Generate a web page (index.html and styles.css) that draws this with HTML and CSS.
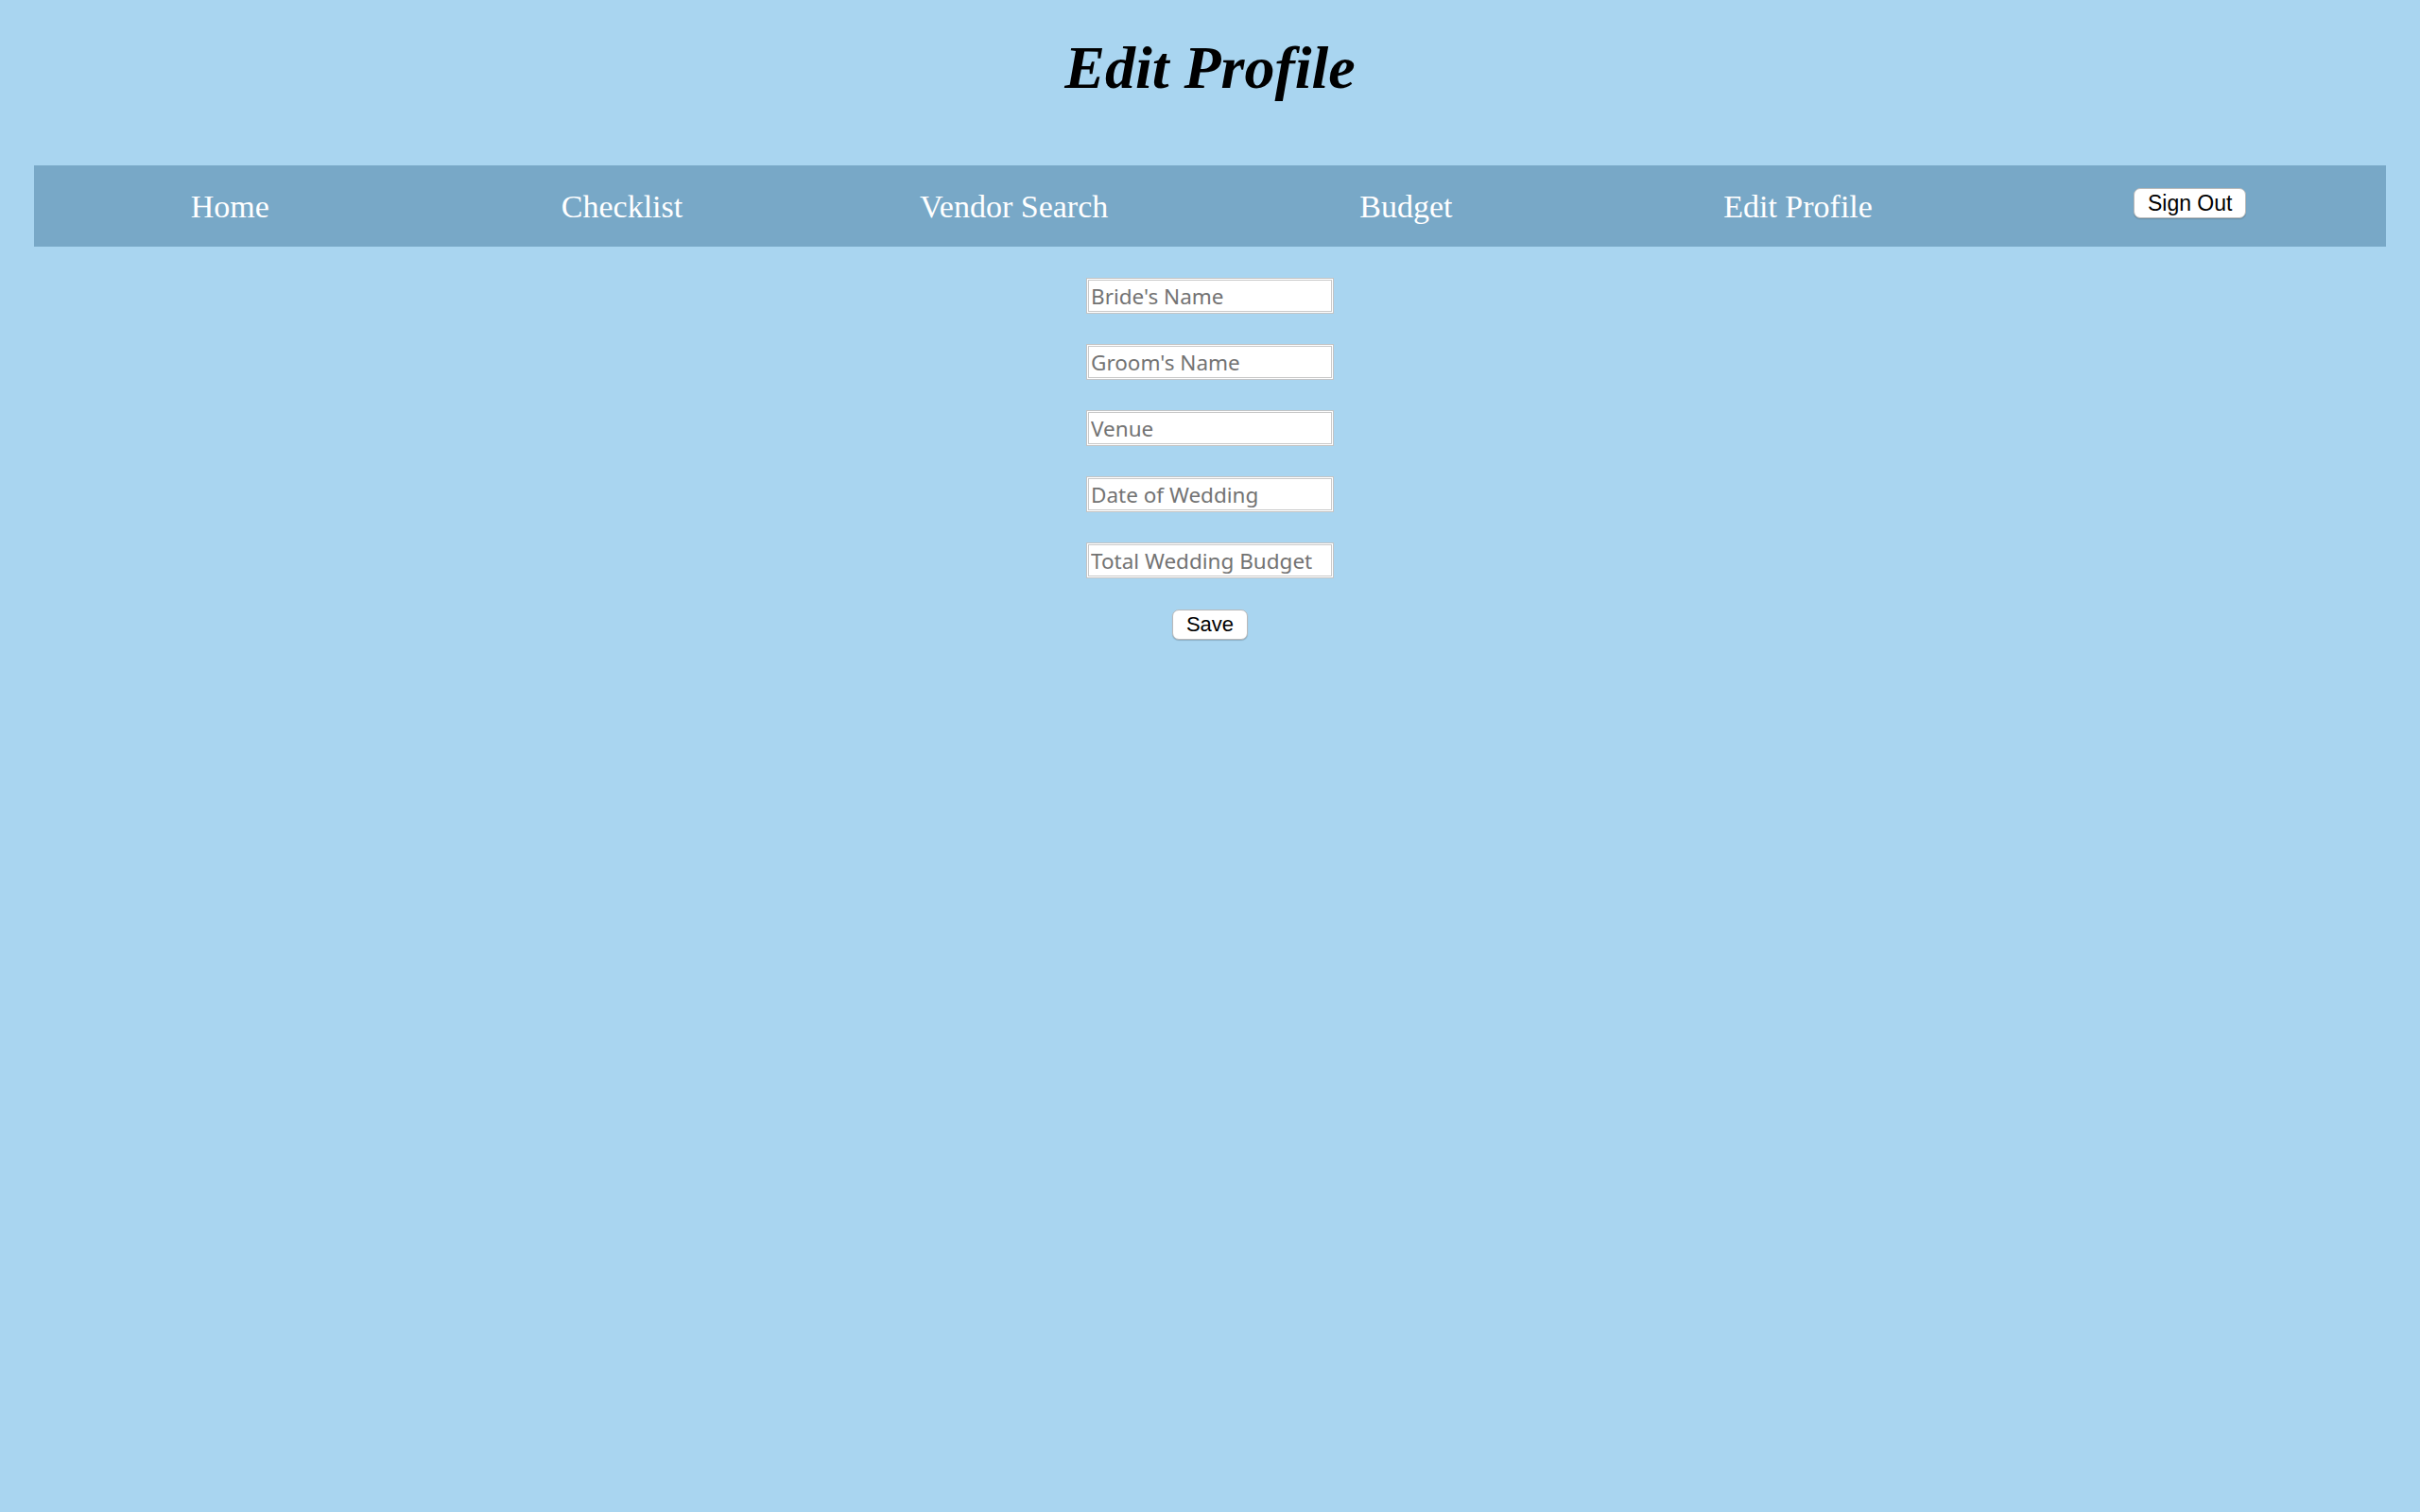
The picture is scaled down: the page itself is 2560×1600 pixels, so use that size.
FILE: index.html
```html
<!DOCTYPE html>
<html lang="en">
<head>
<meta charset="utf-8">
<title>Edit Profile</title>
<link rel="stylesheet" href="styles.css">
</head>
<body>
  <h1 class="page-title">Edit Profile</h1>
  <nav class="nav">
    <a class="nav-item" href="#">Home</a>
    <a class="nav-item" href="#">Checklist</a>
    <a class="nav-item" href="#">Vendor Search</a>
    <a class="nav-item" href="#">Budget</a>
    <a class="nav-item" href="#">Edit Profile</a>
    <div class="nav-item"><button class="btn btn-signout" type="button">Sign Out</button></div>
  </nav>
  <form class="profile-form">
    <input class="field" type="text" placeholder="Bride's Name">
    <input class="field" type="text" placeholder="Groom's Name">
    <input class="field" type="text" placeholder="Venue">
    <input class="field" type="text" placeholder="Date of Wedding">
    <input class="field" type="text" placeholder="Total Wedding Budget">
    <button class="btn btn-save" type="button">Save</button>
  </form>
</body>
</html>
```

FILE: styles.css
```css
html, body {
  margin: 0;
  background: #a9d5f0;
}

body {
  padding: 35px 36px 0;
  min-height: 1600px;
  box-sizing: border-box;
  font-family: "Liberation Serif", "Times New Roman", serif;
}

.page-title {
  margin: 0;
  text-align: center;
  font-size: 64px;
  line-height: 74px;
  font-style: italic;
  font-weight: bold;
  color: #000;
}

.nav {
  margin-top: 66px;
  height: 86px;
  background: #78a8c7;
  display: flex;
}

.nav-item {
  flex: 1 1 0;
  display: flex;
  align-items: center;
  justify-content: center;
  color: #fff;
  text-decoration: none;
  font-size: 34px;
  padding-top: 2px;
}

.btn {
  font-family: "Liberation Sans", Arial, sans-serif;
  font-size: 22px;
  color: #000;
  background: #fff;
  border: 1px solid #b9b9b9;
  border-radius: 7px;
  box-shadow: 0 1px 1px rgba(0, 0, 0, 0.18);
  height: 32px;
  padding: 0;
  line-height: 28px;
  white-space: nowrap;
}

.btn-signout {
  width: 119px;
  font-size: 23px;
  margin-bottom: 8px;
}

.btn-save {
  width: 80px;
  margin-top: 1px;
}

.profile-form {
  margin-top: 33px;
  display: flex;
  flex-direction: column;
  align-items: center;
  gap: 32px;
}

.field {
  box-sizing: border-box;
  width: 262px;
  height: 38px;
  margin: 0;
  padding: 0 4px;
  border: 1px solid #c4c4c4;
  box-shadow: inset 0 0 0 1px #fff, inset 0 0 0 2px #c9c9c9;
  background: #fff;
  font-family: "Noto Sans", "Liberation Sans", Arial, sans-serif;
  font-size: 22.5px;
  color: #333;
  outline: none;
}

.field::placeholder {
  color: #737373;
  opacity: 1;
}
```
